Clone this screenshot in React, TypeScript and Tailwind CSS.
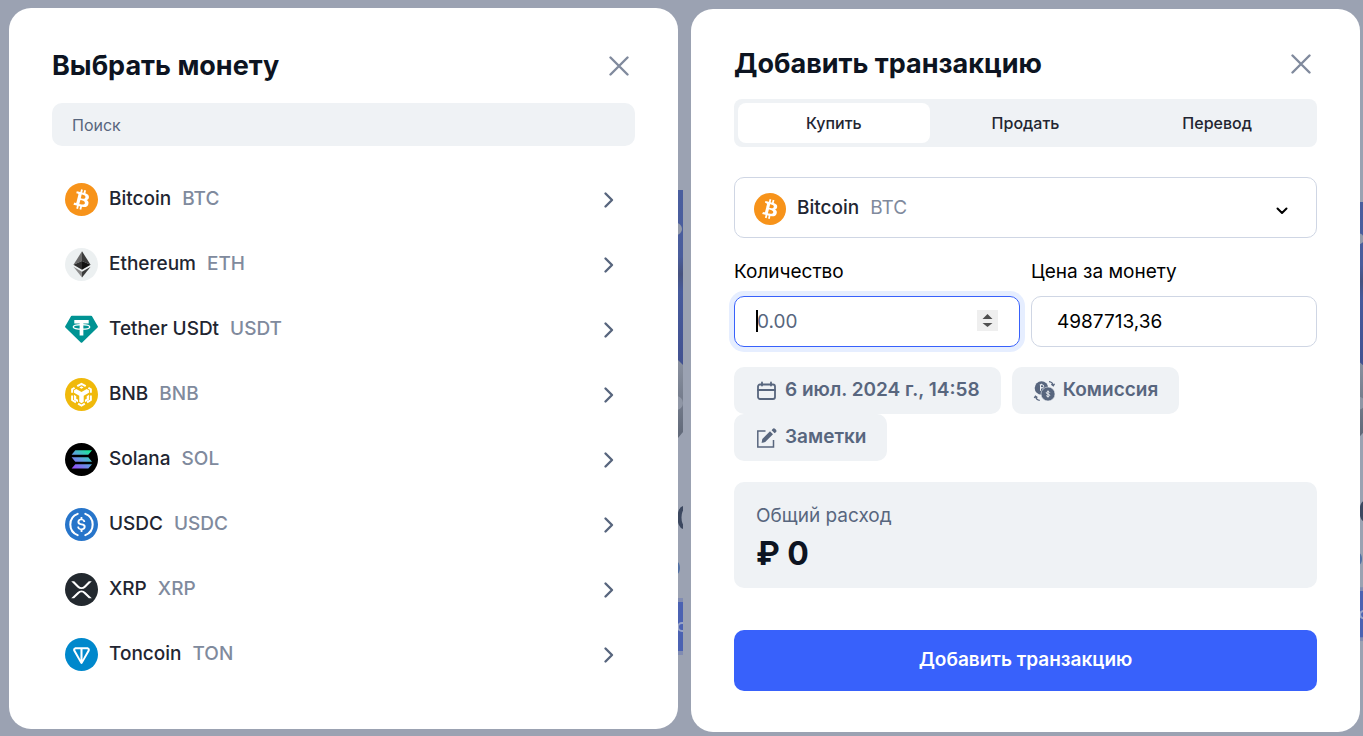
import type { ReactNode } from "react";
import clsx from "clsx";

interface Coin {
    name: string;
    symbol: string;
    icon: ReactNode;
}

function CoinSvg({children, size = 32}: {children: ReactNode; size?: number}) {
    return <svg viewBox={`0 0 ${size} ${size}`} className="w-full h-full" aria-hidden="true">
        {children}
    </svg>
}

const bitcoinIcon = <CoinSvg>
    <circle cx="16" cy="16" r="16" fill="#f7931a" />
    <path fill="#fff" d="M23.189 14.02c.314-2.096-1.283-3.223-3.465-3.975l.708-2.84-1.728-.43-.69 2.765c-.454-.114-.92-.22-1.385-.326l.695-2.783L15.596 6l-.708 2.839c-.376-.086-.746-.17-1.104-.26l.002-.009-2.384-.595-.46 1.846s1.283.294 1.256.312c.7.175.826.638.805 1.006l-.806 3.235c.048.012.11.03.18.057l-.183-.045-1.13 4.532c-.086.212-.303.531-.793.41.018.025-1.256-.313-1.256-.313l-.858 1.978 2.25.561c.418.105.828.215 1.231.318l-.715 2.872 1.727.43.708-2.84c.472.127.93.245 1.378.357l-.706 2.828 1.728.43.715-2.866c2.948.558 5.164.333 6.097-2.333.752-2.146-.037-3.385-1.588-4.192 1.13-.26 1.98-1.003 2.207-2.538zm-3.95 5.538c-.533 2.147-4.148.986-5.32.695l.95-3.805c1.172.293 4.929.872 4.37 3.11zm.535-5.569c-.487 1.953-3.495.96-4.47.717l.86-3.45c.975.243 4.118.696 3.61 2.733z" />
</CoinSvg>;

const coins: Coin[] = [
    {name: "Bitcoin", symbol: "BTC", icon: bitcoinIcon},
    {
        name: "Ethereum",
        symbol: "ETH",
        icon: <CoinSvg>
            <circle cx="16" cy="16" r="16" fill="#ecf0f1" />
            <path fill="#6b6b6b" d="M16.5 3.2 8.2 16.2l8.3-3.6z" />
            <path fill="#3a3a3a" d="M16.5 3.2v9.4l8.3 3.6z" />
            <path fill="#2f2f2f" d="m8.2 16.2 8.3 5v-8.6z" />
            <path fill="#111" d="M16.5 12.6v8.6l8.3-5z" />
            <path fill="#8a8a8a" d="m8.2 18.2 8.3 10.3v-5.5z" />
            <path fill="#3a3a3a" d="M16.5 23v5.5l8.3-10.3z" />
        </CoinSvg>,
    },
    {
        name: "Tether USDt",
        symbol: "USDT",
        icon: <CoinSvg>
            <path fill="#009393" d="M6.6 2.6h18.8a1 1 0 0 1 .8.5l5.6 9.7a1 1 0 0 1-.2 1.2L16.7 28.6a1 1 0 0 1-1.4 0L.4 14a1 1 0 0 1-.2-1.2l5.6-9.7a1 1 0 0 1 .8-.5z" />
            <path fill="#fff" d="M9 6.8h14v3.4h-5.2v11.5h-3.6V10.2H9z" />
            <ellipse cx="16" cy="13.5" rx="8" ry="2.2" fill="none" stroke="#fff" strokeWidth="1.3" />
        </CoinSvg>,
    },
    {
        name: "BNB",
        symbol: "BNB",
        icon: <CoinSvg>
            <circle cx="16" cy="16" r="16" fill="#f0b90b" />
            <g transform="translate(-1.3 -1.3) scale(1.08)">
                <path fill="none" stroke="#fff" strokeWidth="1.8" d="m12.2 8.6 3.8-2.2 3.8 2.2M9.8 10l-2.2 1.3v3.2M22.2 10l2.2 1.3v3.2M7.6 17v4l3.4 2M24.4 17v4l-3.4 2M13 24.2l3 1.7 3-1.7" />
                <path fill="#fff" d="m16 8.7 1.9 1.1-1.9 1.1-1.9-1.1zM9.3 12.2l2-1.1 4.7 2.7 4.7-2.7 2 1.1v2.3L18 17.2v5.4l-2 1.2-2-1.2v-5.4l-4.7-2.7zM9.3 16.3l2 1.2v2.3l1.6.9v2.2l-3.6-2.1zM22.7 16.3l-2 1.2v2.3l-1.6.9v2.2l3.6-2.1z" />
            </g>
        </CoinSvg>,
    },
    {
        name: "Solana",
        symbol: "SOL",
        icon: <CoinSvg>
            <defs>
                <linearGradient id="solana" gradientUnits="userSpaceOnUse" x1="9" y1="26" x2="23" y2="6">
                    <stop offset="0" stopColor="#9945ff" />
                    <stop offset=".5" stopColor="#5f9fe0" />
                    <stop offset="1" stopColor="#14f195" />
                </linearGradient>
            </defs>
            <circle cx="16" cy="16" r="16" />
            <path fill="url(#solana)" d="M10 7.1h16.2l-3.6 4.3H6.4zM6.4 13.8h16.2l3.6 4.3H10zM10 20.5h16.2l-3.6 4.3H6.4z" />
        </CoinSvg>,
    },
    {
        name: "USDC",
        symbol: "USDC",
        icon: <CoinSvg>
            <circle cx="16" cy="16" r="16" fill="#2775ca" />
            <path fill="#fff" d="M20.022 18.124c0-2.124-1.28-2.852-3.84-3.156-1.828-.243-2.193-.728-2.193-1.578 0-.85.61-1.396 1.828-1.396 1.097 0 1.707.364 2.011 1.275a.458.458 0 00.427.303h.975a.416.416 0 00.427-.425v-.06a3.04 3.04 0 00-2.743-2.489V9.142c0-.243-.183-.425-.487-.486h-.915c-.243 0-.426.182-.487.486v1.396c-1.829.242-2.986 1.456-2.986 2.974 0 2.002 1.218 2.791 3.778 3.095 1.707.303 2.255.668 2.255 1.639 0 .97-.853 1.638-2.011 1.638-1.585 0-2.133-.667-2.316-1.578-.06-.242-.244-.364-.427-.364h-1.036a.416.416 0 00-.426.425v.06c.243 1.518 1.219 2.61 3.23 2.914v1.457c0 .242.183.425.487.485h.915c.243 0 .426-.182.487-.485V21.34c1.829-.303 3.047-1.578 3.047-3.217z" />
            <path fill="none" stroke="#fff" strokeWidth="2" strokeLinecap="round" d="M12.3 5.7a11 11 0 0 0 0 20.6M19.7 5.7a11 11 0 0 1 0 20.6" />
        </CoinSvg>,
    },
    {
        name: "XRP",
        symbol: "XRP",
        icon: <CoinSvg>
            <circle cx="16" cy="16" r="16" fill="#23292f" />
            <path fill="#fff" d="M23.07 8h2.89l-6.015 5.957a5.621 5.621 0 01-7.89 0L6.035 8H8.93l4.57 4.523a3.556 3.556 0 004.996 0L23.07 8zM8.895 24.563H6l6.055-5.993a5.621 5.621 0 017.89 0L26 24.562h-2.895L18.5 20a3.556 3.556 0 00-4.996 0l-4.61 4.563z" />
        </CoinSvg>,
    },
    {
        name: "Toncoin",
        symbol: "TON",
        icon: <CoinSvg size={56}>
            <circle cx="28" cy="28" r="28" fill="#0088cc" />
            <path fill="#fff" d="M37.5603 15.6277H18.4386C14.9228 15.6277 12.6944 19.4202 14.4632 22.4861L26.2644 42.9409C27.0345 44.2765 28.9644 44.2765 29.7345 42.9409L41.5381 22.4861C43.3045 19.4251 41.0761 15.6277 37.5627 15.6277H37.5603ZM26.2548 36.8068L23.6847 31.8327L17.4833 20.7414C17.0742 20.0315 17.5795 19.1218 18.4362 19.1218H26.2524V36.8092L26.2548 36.8068ZM38.5108 20.739L32.3118 31.8351L29.7417 36.8068V19.1194H37.5579C38.4146 19.1194 38.9199 20.0291 38.5108 20.739Z" />
        </CoinSvg>,
    },
];

const tabs = ["Купить", "Продать", "Перевод"];

function ChevronIcon() {
    return <svg viewBox="0 0 12 18" className="w-3 h-[18px] shrink-0" fill="none" stroke="#58667e" strokeWidth="2.4" strokeLinecap="round" strokeLinejoin="round" aria-hidden="true">
        <path d="M2.5 2.5 9 9l-6.5 6.5" />
    </svg>
}

function CalendarIcon() {
    return <svg viewBox="0 0 22 22" className="w-[22px] h-[22px] shrink-0" fill="none" stroke="#58667e" strokeWidth="1.8" strokeLinecap="round" aria-hidden="true">
        <rect x="3" y="4.5" width="17" height="14.5" rx="2" />
        <path d="M3 10h17M7 2.5v3M16 2.5v3" />
    </svg>
}

function FeeIcon() {
    return <svg viewBox="0 0 22 22" className="w-[22px] h-[22px] shrink-0" fill="none" aria-hidden="true">
        <circle cx="8.5" cy="8" r="6.8" fill="#58667e" />
        <path stroke="#eff2f5" d="M6.8 4.8h2.4a1.5 1.5 0 0 1 0 3H7.5M7.5 7.8h2M7.5 4.8v6M8.500 3.8v1" />
        <circle cx="15" cy="14" r="7" fill="#58667e" stroke="#eff2f5" strokeWidth=".6" />
        <path stroke="#eff2f5" d="M16.8 12.6c-.3-.6-.9-.9-1.8-.9-1 0-1.7.4-1.7 1.2 0 1.5 3.4.7 3.4 2.3 0 .8-.7 1.2-1.7 1.2-.8 0-1.5-.3-1.8-.9M15 10.5v7" />
        <path stroke="#58667e" strokeWidth="1.2" d="M16 1.7c2.4.2 3.8 1.6 4.2 3.6M18.3 4.3l2 1.5 1.3-2M6.8 20.3c-2.4-.2-3.8-1.6-4.1-3.7M1.2 18l1.2-1.8 2 1.3" />
    </svg>
}

function NotesIcon() {
    return <svg viewBox="0 0 22 22" className="w-[22px] h-[22px] shrink-0" fill="none" aria-hidden="true">
        <path stroke="#58667e" strokeWidth="1.5" d="M10.5 4H2.8v16h15.7v-7" />
        <path fill="#58667e" d="M15 4.2l3 3-7.8 7.8-3.6 1 .7-4.1zM16.6 3.2l1-1.2a1.8 1.8 0 0 1 2.6 0l.6.6a1.8 1.8 0 0 1 0 2.6l-1.2 1z" />
    </svg>
}

/* Edge of the dimmed page that shows behind a dialog */
function PageEdge({className}: {className?: string}) {
    return <svg viewBox="0 0 5 466" preserveAspectRatio="none" className={clsx("absolute left-full w-[5px]", className)} aria-hidden="true">
        <defs>
            <linearGradient id="edge-blue" x1="0" x2="0" y1="0" y2="1">
                <stop offset="0" stopColor="#4a5e9e" />
                <stop offset=".38" stopColor="#4a5d9c" />
                <stop offset=".48" stopColor="#46527f" />
                <stop offset=".58" stopColor="#465a9c" />
                <stop offset="1" stopColor="#425190" />
            </linearGradient>
            <linearGradient id="edge-gray" x1="0" x2="0" y1="0" y2="1">
                <stop offset="0" stopColor="#8a91a0" />
                <stop offset="1" stopColor="#606878" />
            </linearGradient>
        </defs>
        <path fill="url(#edge-blue)" d="M0 0h5v175H0z" />
        <circle cx="-2" cy="39" r="6" fill="#949baa" />
        <path fill="url(#edge-gray)" d="M0 170l5 5v67l-5 6z" />
        <circle cx="-2" cy="213" r="7" fill="#8f96a5" />
        <path d="M6 318C0 318 0 337 6 337" fill="none" stroke="#3c4860" strokeWidth="4" />
        <ellipse cx="-1" cy="378" rx="3" ry="6" fill="#5270a4" />
        <path fill="#818cb2" d="M0 408h5v57H0z" />
        <path fill="#4b62b2" d="M0 412h5v49H0z" />
        <circle cx="4" cy="437" r="4" fill="none" stroke="#98a4c8" strokeWidth="2" />
    </svg>
}

interface DialogProps {
    title: string;
    className?: string;
    edgeClassName?: string;
    children: ReactNode;
}

function Dialog({title, className, edgeClassName, children}: DialogProps) {
    return <div className="relative flex-1 min-w-0">
        <PageEdge className={edgeClassName} />
        <section role="dialog" aria-label={title} className={clsx("rounded-[22px] bg-white px-[43px]", className)}>
            <header className="flex items-center justify-between h-10">
                <h2 className="text-[27px] leading-10 font-bold text-[#0d1421]">{title}</h2>
                <button type="button" aria-label="Закрыть" className="flex items-center justify-center w-8 h-8">
                    <svg viewBox="0 0 20 20" className="w-5 h-5" stroke="#808a9d" strokeWidth="2.4" strokeLinecap="round" aria-hidden="true">
                        <path d="m1.5 1.5 17 17M18.5 1.5l-17 17" />
                    </svg>
                </button>
            </header>
            {children}
        </section>
    </div>
}

function SelectCoin() {
    return <Dialog title="Выбрать монету" className="pt-[38px] pb-[42px]" edgeClassName="top-[182px] h-[466px]">
        <input
            type="search"
            aria-label="Поиск"
            placeholder="Поиск"
            className="block w-full h-[43px] mt-[17px] px-5 rounded-[10px] bg-[#eff2f5] text-base text-[#0d1421] placeholder:text-[#58667e] outline-none"
        />
        <ul className="mt-[21px]">
            {coins.map(coin => (
                <li key={coin.symbol}>
                    <button type="button" className="flex items-center w-full h-[65px] pl-[13px] pr-5 text-[19px] font-medium">
                        <span className="w-[33px] h-[33px] shrink-0">{coin.icon}</span>
                        <span className="ml-[11px] text-[#222531]">{coin.name}</span>
                        <span className="ml-[11px] mr-auto text-[#808a9d]">{coin.symbol}</span>
                        <ChevronIcon />
                    </button>
                </li>
            ))}
        </ul>
    </Dialog>
}

function Chip({icon, children}: {icon: ReactNode; children: ReactNode}) {
    return <button type="button" className="flex items-center gap-2 h-[47px] px-[21px] rounded-[10px] bg-[#eff2f5] text-[19px] font-semibold text-[#58667e]">
        {icon}
        <span>{children}</span>
    </button>
}

function AddTransaction() {
    return <Dialog title="Добавить транзакцию" className="mt-px pt-[35px] pb-[41px]" edgeClassName="top-[194px] h-[440px]">
        <div role="tablist" className="grid grid-cols-3 h-12 mt-[15px] p-1 rounded-lg bg-[#eff2f5]">
            {tabs.map((tab, index) => (
                <button
                    key={tab}
                    type="button"
                    role="tab"
                    aria-selected={index === 0}
                    className={clsx("rounded-lg text-base font-medium text-[#222531]", index === 0 && "bg-white")}
                >
                    {tab}
                </button>
            ))}
        </div>

        <div className="flex items-center h-[61px] mt-[30px] pt-[2px] pl-[19px] pr-7 rounded-[10px] border border-[#cfd6e4] text-[19px]">
            <span className="w-8 h-8 shrink-0">{bitcoinIcon}</span>
            <select aria-label="Монета" className="ml-[11px] appearance-none field-sizing-content bg-transparent font-medium text-[#222531] outline-none">
                <option>Bitcoin</option>
            </select>
            <span className="ml-[11px] mr-auto text-[#808a9d]">BTC</span>
            <svg viewBox="0 0 12 12" className="w-3 h-3" fill="none" stroke="#000" strokeWidth="2" strokeLinecap="round" strokeLinejoin="round" aria-hidden="true">
                <path d="M1.5 5.5 6 10l4.5-4.5" />
            </svg>
        </div>

        <div className="grid grid-cols-2 gap-[11px] mt-5 text-[19px] text-black">
            <div>
                <label htmlFor="quantity" className="block leading-7">Количество</label>
                <div className="relative mt-[10px]">
                    <input
                        id="quantity"
                        inputMode="decimal"
                        placeholder="0.00"
                        className="block w-full h-[51px] px-[22px] rounded-[10px] border border-[#3861fb] ring-[5px] ring-[#e6eeff] placeholder:text-[#58667e] outline-none"
                    />
                    <span className="absolute left-[22px] top-[14px] w-[2px] h-[22px] bg-black" />
                    <svg viewBox="0 0 21 21" className="absolute right-[22px] top-[14px] w-[21px] h-[21px]" aria-hidden="true">
                        <path fill="#efefef" d="M0 0h21v21H0z" />
                        <path fill="#505050" d="m10.5 4 5 5h-10zM10.5 17l-5-4h10z" />
                    </svg>
                </div>
            </div>
            <div>
                <label htmlFor="price" className="block leading-7">Цена за монету</label>
                <input
                    id="price"
                    inputMode="decimal"
                    defaultValue="4987713,36"
                    className="block w-full h-[51px] mt-[10px] px-[25px] rounded-[10px] border border-[#cfd6e4] outline-none"
                />
            </div>
        </div>

        <div className="flex flex-wrap gap-x-[11px] mt-5">
            <Chip icon={<CalendarIcon />}>6 июл. 2024 г., 14:58</Chip>
            <Chip icon={<FeeIcon />}>Комиссия</Chip>
            <Chip icon={<NotesIcon />}>Заметки</Chip>
        </div>

        <div className="h-[106px] mt-[21px] px-[22px] pt-5 rounded-[10px] bg-[#eff2f5]">
            <p className="text-[19px] leading-7 text-[#58667e]">Общий расход</p>
            <p className="mt-1 text-[32px] leading-10 font-bold text-[#0d1421]">₽ 0</p>
        </div>

        <button type="submit" className="block w-full h-[61px] mt-[42px] rounded-[10px] bg-[#3861fb] text-[19px] font-semibold text-white">
            Добавить транзакцию
        </button>
    </Dialog>
}

export default function App() {
    return <main className="flex items-start gap-[13px] min-h-screen overflow-hidden pt-2 pl-[9px] pr-[3px] bg-[#9ba2b2] font-['Inter',sans-serif]">
        <SelectCoin />
        <AddTransaction />
    </main>
}
